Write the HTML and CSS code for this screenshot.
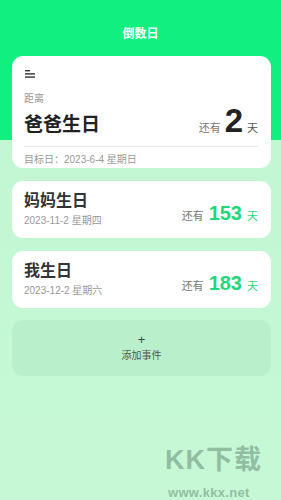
FILE: index.html
```html
<!DOCTYPE html>
<html lang="zh">
<head>
<meta charset="utf-8">
<link rel="stylesheet" href="styles.css">
</head>
<body>
<div class="page">
  <div class="header">
    <div class="title">倒数日</div>
  </div>
  <div class="list">
    <div class="card main">
      <svg class="menu" width="10" height="8" viewBox="0 0 10 8"><rect x="0" y="0" width="5" height="1.4" fill="#333"/><rect x="0" y="3.2" width="10" height="1.4" fill="#333"/><rect x="0" y="6.4" width="10" height="1.4" fill="#333"/></svg>
      <div class="label">距离</div>
      <div class="row">
        <div class="name big">爸爸生日</div>
        <div class="remain"><span class="pre">还有</span><span class="num dark">2</span><span class="unit">天</span></div>
      </div>
      <div class="divider"></div>
      <div class="date">目标日：2023-6-4 星期日</div>
    </div>
    <div class="card item">
      <div class="info">
        <div class="name">妈妈生日</div>
        <div class="date">2023-11-2 星期四</div>
      </div>
      <div class="remain"><span class="pre">还有</span><span class="num green">153</span><span class="unit green">天</span></div>
    </div>
    <div class="card item">
      <div class="info">
        <div class="name">我生日</div>
        <div class="date">2023-12-2 星期六</div>
      </div>
      <div class="remain"><span class="pre">还有</span><span class="num green">183</span><span class="unit green">天</span></div>
    </div>
    <div class="add">
      <div class="plus">+</div>
      <div class="addtext">添加事件</div>
    </div>
  </div>
  <div class="watermark">
    <div class="wm1">KK下载</div>
    <div class="wm2">www.kkx.net</div>
  </div>
</div>
</body>
</html>
```
FILE: styles.css
```css
* { box-sizing: border-box; margin: 0; padding: 0; }
html, body { width: 281px; height: 500px; overflow: hidden; }
body {
  font-family: "Liberation Sans", "Noto Sans CJK SC", sans-serif;
  background: #c3f7d4;
}
.page {
  position: relative;
  width: 281px;
  height: 500px;
  background: linear-gradient(to bottom, #c1f6d2 0%, #c6f8d6 100%);
}
.header {
  height: 140px;
  background: #10ef7f;
  display: flex;
  justify-content: center;
  padding-top: 26px;
}
.title {
  color: #fff;
  font-size: 12px;
  font-weight: bold;
  line-height: 16px;
}
.list {
  margin-top: -84px;
  padding: 0 10px 0 12px;
  display: flex;
  flex-direction: column;
  gap: 13px;
}
.card {
  background: #fff;
  border-radius: 11px;
}
.main {
  height: 112px;
  padding: 14px 13px 0 12px;
  display: flex;
  flex-direction: column;
}
.menu { display: block; margin-left: 1px; }
.label {
  margin-top: 14px;
  font-size: 10px;
  color: #999;
  line-height: 14px;
}
.row {
  display: flex;
  justify-content: space-between;
  align-items: flex-end;
  margin-top: 1px;
  height: 30px;
}
.name {
  font-size: 16px;
  font-weight: bold;
  color: #333;
  line-height: 20px;
}
.name.big {
  font-size: 19px;
  color: #222;
  line-height: 24px;
}
.remain {
  display: flex;
  align-items: baseline;
  gap: 3px;
}
.pre { font-size: 11px; color: #777; }
.unit { font-size: 11px; color: #555; }
.num { font-weight: bold; line-height: 1; }
.num.dark { font-size: 33px; color: #222; margin: 0 1px; }
.num.green { font-size: 20px; color: #1fd77c; margin: 0 2px; }
.green { color: #1fd77c; }
.divider {
  height: 1px;
  background: #ececec;
  margin-top: 9px;
}
.date {
  font-size: 10px;
  color: #999;
  line-height: 14px;
  margin-top: 6px;
}
.item {
  height: 57px;
  padding: 0 13px 0 12px;
  display: flex;
  align-items: center;
  justify-content: space-between;
}
.item .remain { margin-top: 7px; }
.item .date { margin-top: 3px; }
.add {
  height: 56px;
  margin-top: -1px;
  border-radius: 11px;
  background: #b9f0cb;
  display: flex;
  flex-direction: column;
  align-items: center;
  justify-content: center;
  gap: 2px;
}
.plus { font-size: 13px; color: #444; line-height: 14px; }
.addtext { font-size: 10px; color: #555; line-height: 14px; }
.watermark {
  position: absolute;
  left: 165px;
  top: 445px;
  width: 114px;
  color: rgba(110, 150, 125, 0.6);
}
.wm1 { font-size: 27px; font-weight: bold; line-height: 30px; letter-spacing: 1px; }
.wm2 { font-size: 13px; font-weight: bold; line-height: 14px; margin-top: 11px; margin-left: 3px; letter-spacing: 0.3px; }
```
